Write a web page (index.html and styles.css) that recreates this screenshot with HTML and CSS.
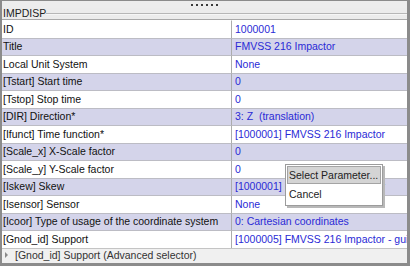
FILE: index.html
```html
<!DOCTYPE html>
<html lang="en">

<head>
    <meta charset="UTF-8">
    <title>IMPDISP</title>

    <link rel="stylesheet" href="styles.css">

</head>

<body>

    <div class="panel">
        <!-- drag handle -->
        <div class="grip"><span class="dots"></span></div>
        <!-- group title -->
        <div class="group"><span class="group_name">IMPDISP</span><span class="group_line"></span></div>

        <div class="props">
            <div class="row"><div class="key">ID</div><div class="val">1000001</div></div>
            <div class="row alt"><div class="key">Title</div><div class="val">FMVSS 216 Impactor</div></div>
            <div class="row"><div class="key">Local Unit System</div><div class="val">None</div></div>
            <div class="row alt"><div class="key">[Tstart] Start time</div><div class="val">0</div></div>
            <div class="row"><div class="key">[Tstop] Stop time</div><div class="val">0</div></div>
            <div class="row alt"><div class="key">[DIR] Direction*</div><div class="val">3: Z &nbsp;(translation)</div></div>
            <div class="row"><div class="key">[Ifunct] Time function*</div><div class="val">[1000001] FMVSS 216 Impactor</div></div>
            <div class="row alt"><div class="key">[Scale_x] X-Scale factor</div><div class="val">0</div></div>
            <div class="row"><div class="key">[Scale_y] Y-Scale factor</div><div class="val">0</div></div>
            <div class="row alt"><div class="key">[Iskew] Skew</div><div class="val">[1000001] FMVSS 216 Impactor</div></div>
            <div class="row"><div class="key">[Isensor] Sensor</div><div class="val">None</div></div>
            <div class="row alt"><div class="key">[Icoor] Type of usage of the coordinate system</div><div class="val">0: Cartesian coordinates</div></div>
            <div class="row"><div class="key">[Gnod_id] Support</div><div class="val">[1000005] FMVSS 216 Impactor - guide</div></div>
        </div>

        <div class="advanced"><span class="arrow"></span>[Gnod_id] Support (Advanced selector)</div>

        <!-- context menu -->
        <div class="menu">
            <div class="menu_item active">Select Parameter...</div>
            <div class="menu_item">Cancel</div>
        </div>
    </div>

</body>

</html>
```

FILE: styles.css
```css
html,
body {
    margin: 0;
    padding: 0;
}

body {
    font-family: "Liberation Sans", Arial, sans-serif;
    font-size: 10.5px;
    color: #111;
}

.panel {
    position: relative;
    width: 410px;
    height: 266px;
    box-sizing: border-box;
    border: 2px solid #8b8b8b;
    border-top-width: 1px;
    border-right-width: 3px;
    border-bottom-width: 3px;
    background: #efefef;
    display: flex;
    flex-direction: column;
    overflow: hidden;
}

.grip {
    height: 7px;
    display: flex;
    justify-content: center;
    align-items: center;
    background: #ededed;
}

.dots {
    width: 27px;
    height: 2px;
    margin-top: 1px;
    background-image: linear-gradient(90deg, #3a3a3a 2px, transparent 2px);
    background-size: 5px 2px;
}

.group {
    height: 11px;
    display: flex;
    align-items: center;
    background: #ececec;
    border-bottom: 1px solid #a9a9a9;
}

.group_name {
    padding-left: 1px;
    line-height: 11px;
    color: #222;
}

.group_line {
    flex: 1;
    height: 1px;
    margin-top: 1px;
    background: #b7b7b7;
    border-bottom: 1px solid #f6f6f6;
}

.props {
    display: grid;
    grid-template-columns: 229px 1fr;
    grid-auto-rows: 17.5px;
}

.row {
    display: contents;
}

.key,
.val {
    display: flex;
    align-items: center;
    padding-bottom: 1px;
    box-sizing: border-box;
    white-space: nowrap;
    overflow: hidden;
    border-top: 1px solid #bcbcc4;
    background: #fff;
}

.key {
    padding-left: 1px;
}

.val {
    padding-left: 3px;
    border-left: 1px solid #acacac;
    color: #2a2ad6;
}

.row.alt .key,
.row.alt .val {
    background: #d4d4ea;
}

.row:first-child .key,
.row:first-child .val {
    border-top-color: #fff;
}

.advanced {
    height: 15px;
    display: flex;
    align-items: center;
    padding-bottom: 1px;
    box-sizing: border-box;
    border-top: 1px solid #c4c4c4;
    background: #f0f0f0;
    color: #333;
    white-space: nowrap;
}

.arrow {
    width: 0;
    height: 0;
    margin: 0 7px 0 3px;
    border-top: 3px solid transparent;
    border-bottom: 3px solid transparent;
    border-left: 3px solid #8a8a8a;
}

.menu {
    position: absolute;
    left: 283px;
    top: 163px;
    width: 94px;
    padding: 1px;
    background: #fff;
    border: 1px solid #9c9c9c;
    box-shadow: 2px 2px 0 #b8b8b8;
    color: #222;
}

.menu_item {
    height: 16px;
    line-height: 16px;
    padding-left: 1px;
    border: 1px solid transparent;
}

.menu_item.active {
    background: #d4d4d4;
    border-color: #a4a4a4;
}

.menu_item + .menu_item {
    height: 18px;
    line-height: 18px;
}
```
